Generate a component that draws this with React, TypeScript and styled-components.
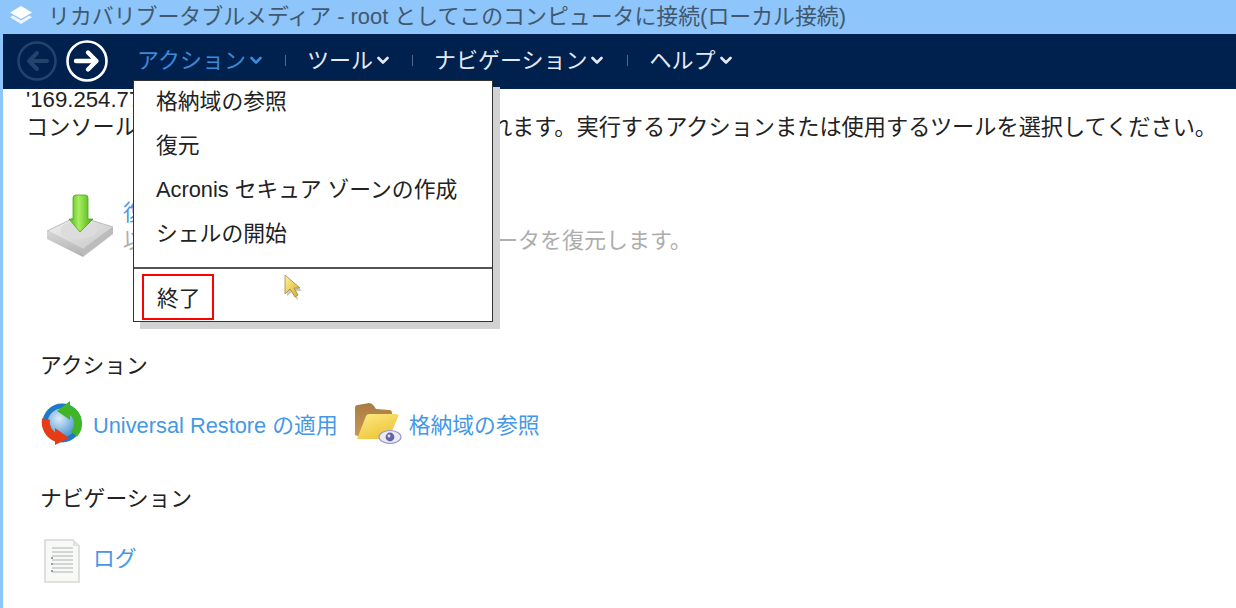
import styled, { createGlobalStyle } from 'styled-components';

const GlobalStyle = createGlobalStyle`
	html, body {
		margin: 0;
		padding: 0;
		background: #fff;
	}
	* {
		box-sizing: border-box;
	}
`;

function BackIcon() {
	return (
		<svg width='42' height='42' viewBox='0 0 42 42' fill='none'>
			<circle cx='21' cy='21' r='18.5' stroke='#24436c' strokeWidth='2.5' />
			<path d='M31 21H13M21 13l-8 8 8 8' stroke='#24436c' strokeWidth='4' strokeLinecap='round' strokeLinejoin='round' />
		</svg>
	);
}

function ForwardIcon() {
	return (
		<svg width='44' height='44' viewBox='0 0 44 44' fill='none'>
			<circle cx='22' cy='22' r='19.5' stroke='#fff' strokeWidth='2.6' />
			<path d='M11 22h20M23 13.5l8.5 8.5-8.5 8.5' stroke='#fff' strokeWidth='4.4' strokeLinecap='round' strokeLinejoin='round' />
		</svg>
	);
}

function StackIcon() {
	return (
		<svg width='24' height='20' viewBox='0 0 24 20'>
			<path d='M12 1 23 7.5 12 14 1 7.5z' fill='#fff' />
			<path d='M3.8 10.5 12 15.4l8.2-4.9 2.8 1.7L12 19 1 12.2z' fill='#eef5fd' />
		</svg>
	);
}

function Chevron() {
	return (
		<ChevronSvg width='12' height='9' viewBox='0 0 12 9' fill='none'>
			<path d='M1.5 2 6 6.5 10.5 2' stroke='currentColor' strokeWidth='2.6' strokeLinecap='round' strokeLinejoin='round' />
		</ChevronSvg>
	);
}

function RecoverIcon() {
	return (
		<svg width='74' height='68' viewBox='0 0 74 68'>
			<defs>
				<linearGradient id='diskTop' x1='0' y1='0' x2='1' y2='1'>
					<stop offset='0' stopColor='#f2f2f2' />
					<stop offset='1' stopColor='#c6c6c6' />
				</linearGradient>
				<linearGradient id='diskSide' x1='0' y1='0' x2='0' y2='1'>
					<stop offset='0' stopColor='#d8d8d8' />
					<stop offset='1' stopColor='#b0b0b0' />
				</linearGradient>
				<linearGradient id='arrowFill' x1='0' y1='0' x2='1' y2='0'>
					<stop offset='0' stopColor='#4cb415' />
					<stop offset='0.4' stopColor='#a8ee60' />
					<stop offset='1' stopColor='#46ac10' />
				</linearGradient>
			</defs>
			<path d='M4 38 35 23 70 34 40 56z' fill='url(#diskTop)' stroke='#bcbcbc' />
			<path d='M4 38 40 56v8L4 46z' fill='url(#diskSide)' />
			<path d='M40 56 70 34v7L40 64z' fill='#bcbcbc' />
			<ellipse cx='36' cy='37' rx='18' ry='9' fill='#dcdcdc' />
			<path d='M30 5q0-3 3-3h9q3 0 3 3v21h5L37 39 26 26h4z' fill='url(#arrowFill)' stroke='#47a813' strokeWidth='0.8' />
		</svg>
	);
}

function RestoreIcon() {
	return (
		<svg width='44' height='44' viewBox='0 0 44 44' fill='none'>
			<defs>
				<radialGradient id='globe' cx='0.42' cy='0.38' r='0.7'>
					<stop offset='0' stopColor='#dcecf9' />
					<stop offset='0.6' stopColor='#6aa8dc' />
					<stop offset='1' stopColor='#2b78bf' />
				</radialGradient>
			</defs>
			<circle cx='22' cy='22' r='18' fill='url(#globe)' />
			<circle cx='22' cy='22' r='17' stroke='#1f78c8' strokeWidth='5' />
			<path d='M29 8.5A15.5 15.5 0 0 1 34 33' stroke='#3fb526' strokeWidth='8' />
			<path d='M17 10 30 0v19z' fill='#3fb526' />
			<path d='M6 18A17 17 0 0 0 17 37' stroke='#e63c16' strokeWidth='8' />
			<path d='M29 37 15 27v17z' fill='#e63c16' />
		</svg>
	);
}

function FolderIcon() {
	return (
		<svg width='48' height='42' viewBox='0 0 48 42'>
			<defs>
				<linearGradient id='folderFront' x1='0' y1='0' x2='0.6' y2='1'>
					<stop offset='0' stopColor='#fdea84' />
					<stop offset='1' stopColor='#eec53a' />
				</linearGradient>
				<linearGradient id='folderBack' x1='0' y1='0' x2='0' y2='1'>
					<stop offset='0' stopColor='#a87b44' />
					<stop offset='1' stopColor='#c99a55' />
				</linearGradient>
			</defs>
			<path d='M1 33V6q0-3 3-3l11-2q3 0 5 3l2 3 13 1q3 0 3 3v6L8 36z' fill='url(#folderBack)' />
			<path d='M3 37 12 14q1-2 3-2h27q3 0 2 3l-8 19q-1 3-4 3H5q-2 0-2 0z' fill='url(#folderFront)' />
			<ellipse cx='36' cy='35' rx='11' ry='6.5' fill='#eceaf2' stroke='#9d9cc4' strokeWidth='1.2' />
			<circle cx='36' cy='35' r='4.4' fill='#6464a8' />
			<circle cx='35' cy='34' r='1.4' fill='#e8e8f6' />
		</svg>
	);
}

function LogIcon() {
	return (
		<svg width='38' height='46' viewBox='0 0 38 46'>
			<path d='M2 2h28l6 6v36H2z' fill='#f8f8f6' stroke='#d8d8d6' strokeWidth='1.6' />
			<path d='M30 2v6h6z' fill='#e2e2e2' />
			<path d='M9 10h21M9 14h21M9 18h21M9 22h21M9 26h21M9 30h21M9 34h21' stroke='#d2d6d7' strokeWidth='2' />
			<path d='M8 20h2M8 26h2M8 33h2' stroke='#9a9ea0' strokeWidth='2' />
		</svg>
	);
}

function CursorIcon() {
	return (
		<svg width='22' height='30' viewBox='0 0 22 30'>
			<defs>
				<linearGradient id='cursorFill' x1='0' y1='0' x2='1' y2='1'>
					<stop offset='0' stopColor='#fff2a8' />
					<stop offset='1' stopColor='#d8ae14' />
				</linearGradient>
			</defs>
			<path d='M4 3v19l5-4 5 8 1-1-3-8 7 0z' fill='#000' opacity='0.22' transform='translate(1 1)' />
			<path d='M3 2v19l5-5 5 8 3-2-4-7h6z' fill='url(#cursorFill)' stroke='#9c8a3c' strokeWidth='0.8' />
		</svg>
	);
}

const navItems = [
	{ label: 'アクション', active: true, gapBefore: 0 },
	{ label: 'ツール', active: false, gapBefore: 23 },
	{ label: 'ナビゲーション', active: false, gapBefore: 23 },
	{ label: 'ヘルプ', active: false, gapBefore: 24 },
];

function App() {
	return (
		<Page>
			<GlobalStyle />
			<TitleBar>
				<StackIcon />
				<TitleText>リカバリブータブルメディア - root としてこのコンピュータに接続(ローカル接続)</TitleText>
			</TitleBar>
			<Main>
				<NavBar>
					<RoundButtons>
						<BackIcon />
						<ForwardIcon />
					</RoundButtons>
					<NavList>
						{navItems.map((item, i) => (
							<NavGroup key={item.label}>
								{i > 0 && <NavDivider $gapBefore={item.gapBefore} />}
								<NavItem $active={item.active}>
									{item.label}
									<Chevron />
								</NavItem>
							</NavGroup>
						))}
					</NavList>
					<Dropdown>
						<DropdownItem>格納域の参照</DropdownItem>
						<DropdownItem>復元</DropdownItem>
						<DropdownItem>Acronis セキュア ゾーンの作成</DropdownItem>
						<DropdownItem>シェルの開始</DropdownItem>
						<DropdownSeparator />
						<ExitRow>
							<ExitBox>終了</ExitBox>
						</ExitRow>
						<CursorSpot>
							<CursorIcon />
						</CursorSpot>
					</Dropdown>
				</NavBar>
				<Content>
					<Intro>
						<div>'169.254.77</div>
						<div>
							コンソール
							<BehindMenu $width={353} />
							れます。実行するアクションまたは使用するツールを選択してください。
						</div>
					</Intro>
					<HeroRow>
						<RecoverIcon />
						<HeroText>
							<LinkText>復元</LinkText>
							<HeroDesc>
								以
								<BehindMenu $width={351} />
								ータを復元します。
							</HeroDesc>
						</HeroText>
					</HeroRow>
					<SectionTitle $top={87}>アクション</SectionTitle>
					<ActionRow>
						<ActionLink>
							<RestoreIcon />
							<UniversalLink>Universal Restore の適用</UniversalLink>
						</ActionLink>
						<ActionLink>
							<FolderIcon />
							<LinkText>格納域の参照</LinkText>
						</ActionLink>
					</ActionRow>
					<SectionTitle $top={36}>ナビゲーション</SectionTitle>
					<LogRow>
						<LogIcon />
						<LogLink>ログ</LogLink>
					</LogRow>
				</Content>
			</Main>
		</Page>
	);
}

const Page = styled.div`
	display: flex;
	flex-direction: column;
	width: 1236px;
	height: 608px;
	overflow: hidden;
	background: #8ec5fa;
	font-family: 'Liberation Sans', 'Noto Sans CJK JP', sans-serif;
	font-size: 21.8px;
	color: #222;
`;

const TitleBar = styled.div`
	display: flex;
	align-items: center;
	gap: 15px;
	flex: none;
	height: 34px;
	padding: 0 0 5px 9px;
`;

const TitleText = styled.span`
	font-size: 21.9px;
	color: #41586f;
	white-space: nowrap;
`;

const Main = styled.div`
	display: flex;
	flex-direction: column;
	flex: 1;
	margin-left: 3px;
	background: #fff;
`;

const NavBar = styled.nav`
	position: relative;
	display: flex;
	align-items: center;
	flex: none;
	height: 55px;
	padding-left: 13px;
	background: #00204e;
`;

const RoundButtons = styled.div`
	display: flex;
	align-items: center;
	gap: 7px;
	padding-bottom: 2px;
`;

const NavList = styled.div`
	display: flex;
	align-items: center;
	margin-left: 28px;
	padding-bottom: 7px;
`;

const NavGroup = styled.div`
	display: flex;
	align-items: center;
`;

const NavDivider = styled.span<{ $gapBefore: number }>`
	width: 1px;
	height: 11px;
	margin: 5px 21px 0 ${(p) => p.$gapBefore}px;
	background: #51688a;
`;

const NavItem = styled.div<{ $active: boolean }>`
	display: flex;
	align-items: center;
	gap: 4px;
	font-size: 22px;
	color: ${(p) => (p.$active ? '#3b8bdc' : '#e4eaf2')};
	white-space: nowrap;
`;

const ChevronSvg = styled.svg`
	margin-top: 4px;
`;

const Dropdown = styled.div`
	position: absolute;
	top: 46px;
	left: 130px;
	z-index: 2;
	width: 360px;
	height: 242px;
	padding-top: 1px;
	border: 1.5px solid #333;
	background: #fff;
	box-shadow: 7px 7px 0 #d2d2d2;
`;

const DropdownItem = styled.div`
	display: flex;
	align-items: center;
	height: 44px;
	padding-left: 22px;
	white-space: nowrap;

	&:first-child {
		margin-top: -5px;
	}
`;

const DropdownSeparator = styled.div`
	height: 1.5px;
	margin-top: 14px;
	background: #555;
`;

const ExitRow = styled.div`
	padding: 5px 0 0 8px;
`;

const ExitBox = styled.div`
	display: flex;
	align-items: center;
	width: 72px;
	height: 46px;
	padding-left: 13px;
	border: 2px solid #ff0000;
`;

const CursorSpot = styled.div`
	position: absolute;
	top: 192px;
	left: 148px;
`;

const Content = styled.div`
	flex: 1;
	padding-left: 37px;

	svg {
		filter: blur(0.5px);
	}
`;

const Intro = styled.div`
	margin: -3px 0 0 -14px;
	font-size: 22.2px;
	line-height: 28px;
	white-space: nowrap;
`;

const BehindMenu = styled.span<{ $width: number }>`
	display: inline-block;
	width: ${(p) => p.$width}px;
`;

const HeroRow = styled.div`
	display: flex;
	align-items: center;
	gap: 6px;
	margin: 51px 0 0 3px;
`;

const HeroText = styled.div`
	display: flex;
	flex-direction: column;
	gap: 2px;
	font-size: 22px;
	line-height: 26px;
`;

const LinkText = styled.span`
	color: #4598e6;
	white-space: nowrap;
`;

const UniversalLink = styled(LinkText)`
	margin: 0 1px 0 2px;
`;

const LogLink = styled(LinkText)`
	margin-bottom: 10px;
`;

const HeroDesc = styled.span`
	color: #adadad;
	white-space: nowrap;
`;

const SectionTitle = styled.div<{ $top: number }>`
	margin-top: ${(p) => p.$top}px;
`;

const ActionRow = styled.div`
	display: flex;
	align-items: center;
	gap: 15px;
	margin-top: 22px;
`;

const ActionLink = styled.div`
	display: flex;
	align-items: center;
	gap: 7px;
`;

const LogRow = styled.div`
	display: flex;
	align-items: center;
	gap: 12px;
	margin: 26px 0 0 3px;
`;

export default App;
